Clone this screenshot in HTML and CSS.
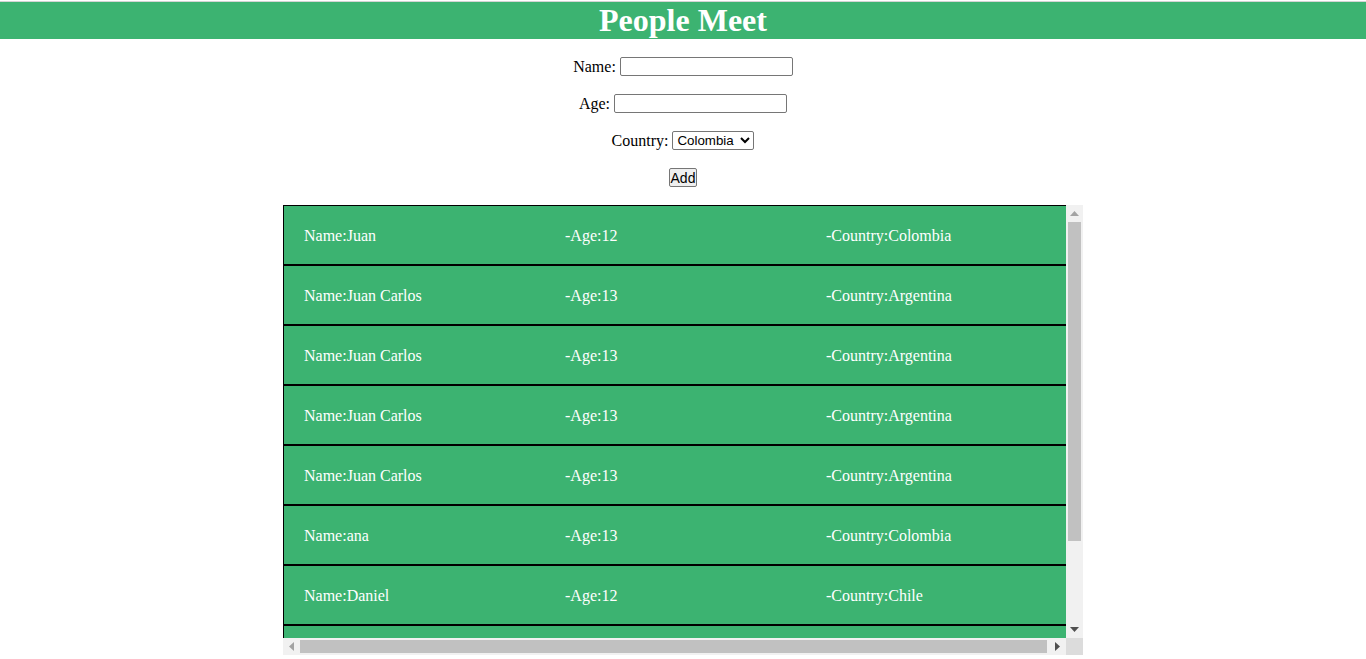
FILE: index.html
```html
<!DOCTYPE html>
<html>
<head>
<meta charset="utf-8">
<title>People Meet</title>
<link rel="stylesheet" href="styles.css">
</head>
<body>
<h1 class="title">People Meet</h1>
<form class="form">
  <p class="row"><label>Name:</label><input class="field" type="text"></p>
  <p class="row"><label>Age:</label><input class="field" type="text"></p>
  <p class="row"><label>Country:</label><select class="choice"><option>Colombia</option><option>Argentina</option><option>Chile</option></select></p>
  <p class="row"><button class="btn" type="button">Add</button></p>
</form>
<div class="scroller">
  <div class="viewport">
    <div class="item"><span>Name:Juan</span><span>-Age:12</span><span>-Country:Colombia</span></div>
    <div class="item"><span>Name:Juan Carlos</span><span>-Age:13</span><span>-Country:Argentina</span></div>
    <div class="item"><span>Name:Juan Carlos</span><span>-Age:13</span><span>-Country:Argentina</span></div>
    <div class="item"><span>Name:Juan Carlos</span><span>-Age:13</span><span>-Country:Argentina</span></div>
    <div class="item"><span>Name:Juan Carlos</span><span>-Age:13</span><span>-Country:Argentina</span></div>
    <div class="item"><span>Name:ana</span><span>-Age:13</span><span>-Country:Colombia</span></div>
    <div class="item"><span>Name:Daniel</span><span>-Age:12</span><span>-Country:Chile</span></div>
    <div class="item item-cut"></div>
  </div>
  <div class="vbar">
    <div class="sbtn"><svg width="9" height="5" viewBox="0 0 9 5"><polygon points="0,5 9,5 4.5,0" fill="#a3a3a3"/></svg></div>
    <div class="vtrack"><div class="vthumb"></div></div>
    <div class="sbtn"><svg width="9" height="5" viewBox="0 0 9 5"><polygon points="0,0 9,0 4.5,5" fill="#505050"/></svg></div>
  </div>
  <div class="hbar">
    <div class="sbtn"><svg width="5" height="9" viewBox="0 0 5 9"><polygon points="5,0 5,9 0,4.5" fill="#a3a3a3"/></svg></div>
    <div class="htrack"><div class="hthumb"></div></div>
    <div class="sbtn"><svg width="5" height="9" viewBox="0 0 5 9"><polygon points="0,0 0,9 5,4.5" fill="#505050"/></svg></div>
  </div>
  <div class="corner"></div>
</div>
</body>
</html>
```
FILE: styles.css
```css
html { background: #fff; }
body {
  margin: 0;
  font-family: "Liberation Serif", "Times New Roman", serif;
  font-size: 16px;
  color: #000;
}
.title {
  margin: 1px 0 0;
  border-top: 1px solid #d4d4d4;
  background: #3cb371;
  color: #fff;
  text-align: center;
  font-size: 32px;
  font-weight: bold;
  line-height: 37px;
}
.form {
  margin: 0;
  padding: 17px 0;
  display: flex;
  flex-direction: column;
  gap: 16px;
}
.row {
  margin: 0;
  height: 21px;
  display: flex;
  justify-content: center;
  align-items: center;
  gap: 4px;
  line-height: 18px;
}
.row label { padding-top: 1px; }
.field {
  box-sizing: border-box;
  width: 173px;
  height: 19px;
  margin: 0;
  border: 1px solid #767676;
  border-radius: 2px;
  padding: 1px 2px;
  font: 13.33px Arial, "Liberation Sans", sans-serif;
  background: #fff;
}
.choice {
  box-sizing: border-box;
  width: 82px;
  height: 19px;
  margin: 0;
  border: 1px solid #767676;
  border-radius: 2px;
  font: 13.33px Arial, "Liberation Sans", sans-serif;
  color: #000;
  background: #fff;
  padding: 0;
}
.btn {
  box-sizing: border-box;
  height: 19px;
  margin: 0;
  padding: 0 1px;
  border: 1px solid #767676;
  border-radius: 2px;
  background: #efefef;
  font: 14px Arial, "Liberation Sans", sans-serif;
  color: #000;
}
.scroller {
  width: 800px;
  height: 450px;
  margin: 0 auto;
  display: grid;
  grid-template-columns: 783px 17px;
  grid-template-rows: 433px 17px;
}
.viewport {
  overflow: hidden;
}
.item {
  width: 100%;
  border: 1px solid #000;
  background: #3cb371;
  color: #fff;
  display: grid;
  grid-template-columns: repeat(3, 1fr);
  padding: 20.5px 0 19.5px;
  line-height: 18px;
  min-height: 18px;
}
.item span { padding-left: 20px; white-space: nowrap; }

.vbar, .hbar {
  background: #f1f1f1;
  display: flex;
}
.vbar { flex-direction: column; }
.sbtn {
  width: 17px;
  height: 17px;
  flex: none;
  display: flex;
  align-items: center;
  justify-content: center;
}
.vtrack { flex: 1; padding: 0 2px; }
.vthumb { height: 319px; background: #c1c1c1; }
.htrack { flex: 1; padding: 2px 2px 2px 0; }
.hthumb { width: 747px; height: 13px; background: #c1c1c1; }
.corner { background: #dcdcdc; }
```
